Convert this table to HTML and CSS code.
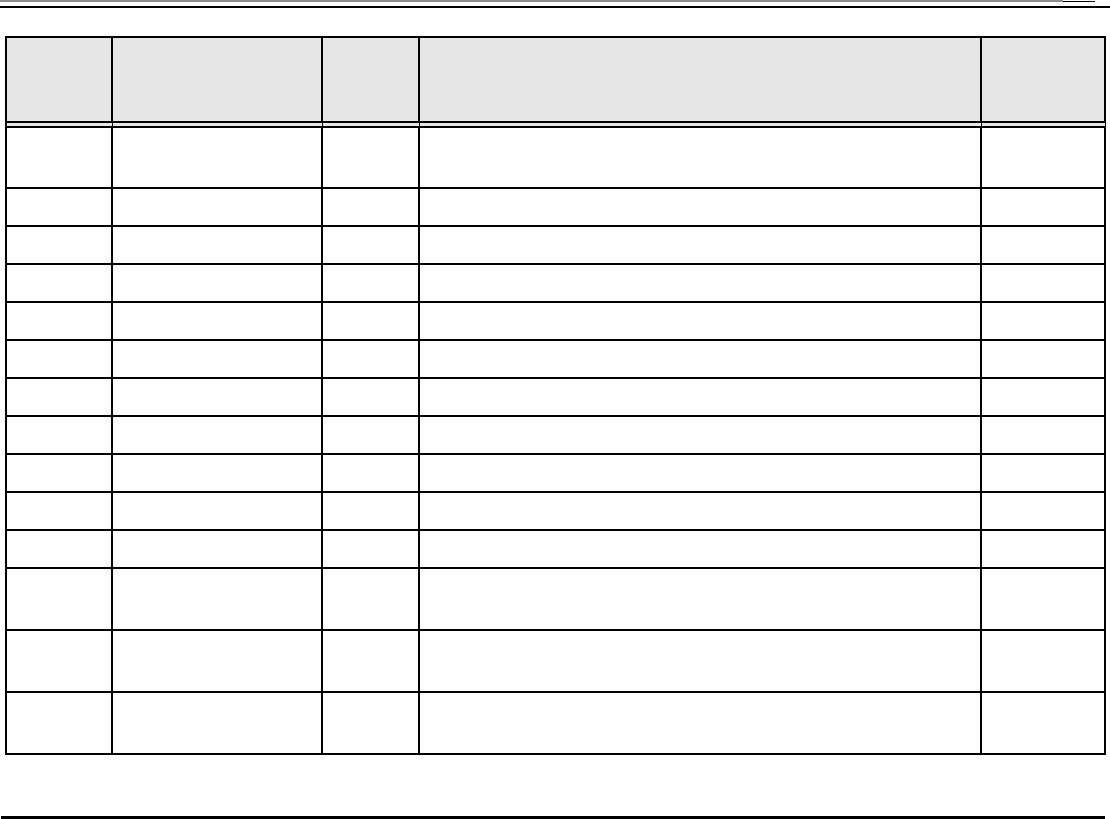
FILE: index.html
```html
<!DOCTYPE html>
<html>
<head>
<meta charset="utf-8">
<link rel="stylesheet" href="styles.css">
</head>
<body>
<div class="page">
  <header class="top">
    <div class="top-bar"><span class="top-gray"></span><span class="top-dark"></span></div>
    <div class="top-rule"></div>
  </header>
  <main class="grid">
    <div class="cell head"></div><div class="cell head"></div><div class="cell head"></div><div class="cell head"></div><div class="cell head"></div>
    <div class="cell r61"></div><div class="cell r61"></div><div class="cell r61"></div><div class="cell r61"></div><div class="cell r61"></div>
    <div class="cell"></div><div class="cell"></div><div class="cell"></div><div class="cell"></div><div class="cell"></div>
    <div class="cell"></div><div class="cell"></div><div class="cell"></div><div class="cell"></div><div class="cell"></div>
    <div class="cell"></div><div class="cell"></div><div class="cell"></div><div class="cell"></div><div class="cell"></div>
    <div class="cell"></div><div class="cell"></div><div class="cell"></div><div class="cell"></div><div class="cell"></div>
    <div class="cell"></div><div class="cell"></div><div class="cell"></div><div class="cell"></div><div class="cell"></div>
    <div class="cell"></div><div class="cell"></div><div class="cell"></div><div class="cell"></div><div class="cell"></div>
    <div class="cell"></div><div class="cell"></div><div class="cell"></div><div class="cell"></div><div class="cell"></div>
    <div class="cell"></div><div class="cell"></div><div class="cell"></div><div class="cell"></div><div class="cell"></div>
    <div class="cell"></div><div class="cell"></div><div class="cell"></div><div class="cell"></div><div class="cell"></div>
    <div class="cell"></div><div class="cell"></div><div class="cell"></div><div class="cell"></div><div class="cell"></div>
    <div class="cell r62"></div><div class="cell r62"></div><div class="cell r62"></div><div class="cell r62"></div><div class="cell r62"></div>
    <div class="cell r62"></div><div class="cell r62"></div><div class="cell r62"></div><div class="cell r62"></div><div class="cell r62"></div>
    <div class="cell r62"></div><div class="cell r62"></div><div class="cell r62"></div><div class="cell r62"></div><div class="cell r62"></div>
  </main>
  <footer class="bottom-rule"></footer>
</div>
</body>
</html>
```
FILE: styles.css
```css
html, body {
  margin: 0;
  padding: 0;
  background: #fff;
  font-family: "Liberation Sans", Arial, sans-serif;
}
.page {
  width: 1110px;
  height: 819px;
  display: flex;
  flex-direction: column;
}
.top {
  display: flex;
  flex-direction: column;
}
.top-bar {
  display: flex;
  align-items: flex-end;
  height: 2px;
}
.top-gray {
  width: 1063px;
  height: 2px;
  background: #8c8c8c;
}
.top-dark {
  width: 32px;
  height: 1px;
  background: #000;
}
.top-rule {
  margin-top: 4px;
  height: 2px;
  background: #000;
}
.grid {
  margin: 28px 0 0 5px;
  width: 1101px;
  display: grid;
  grid-template-columns: 106px 210px 97px 562px 124px;
  border-left: 2px solid #000;
  border-top: 2px solid #000;
  box-sizing: border-box;
}
.cell {
  height: 38px;
  box-sizing: border-box;
  border-right: 2px solid #000;
  border-bottom: 2px solid #000;
}
.cell.head {
  height: 90px;
  background: #e6e6e6;
  border-bottom: 7px double #000;
}
.cell.r61 { height: 61px; }
.cell.r62 { height: 62px; }
.bottom-rule {
  margin-top: auto;
  margin-bottom: 0;
  margin-left: 1px;
  width: 1104px;
  height: 3px;
  background: #000;
}
```
